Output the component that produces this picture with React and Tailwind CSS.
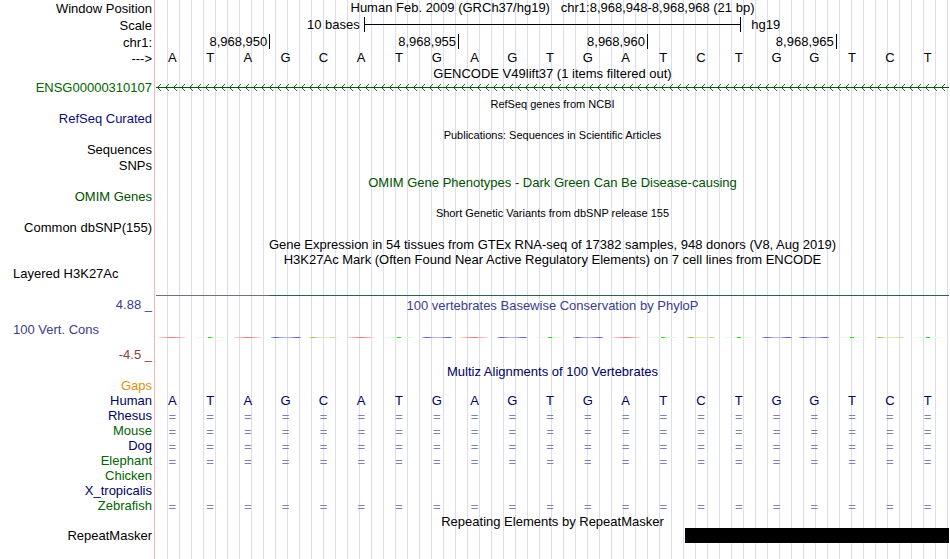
import React from 'react';

const BASES = 'ATAGCATGAGTGATCTGGTCT'.split('');

const consStyles = {
  A: 'w-7 bg-linear-to-r from-[#ffe0e0] via-[#ec7070] to-[#ffe0e0]',
  T: 'w-7 bg-[linear-gradient(to_right,#e6fae6_12px,#20e020_12px,#20e020_16px,#e6fae6_16px)]',
  G: 'w-[30px] bg-[linear-gradient(to_right,#c8c8ff,#5050e0_4px,#b8b8ff_12px,#b8b8ff_18px,#5050e0_27px,#a0a0f0)]',
  C: 'w-7 bg-[linear-gradient(to_right,#e0e0b0,#b0b040_4px,#e4e4c0_9px,#e4e4c0_20px,#c8c880_25px,#ececd0)]',
};

const Row = ({ height = 'h-[15px]', label, labelClass = 'justify-end pb-0.5 text-black', children }) => {
  return (
    <div className={`flex items-stretch ${height}`}>
      <div className={`flex w-[155px] shrink-0 items-center border-r border-[#ffb4b4] pr-0.5 whitespace-pre ${labelClass}`}>
        {label}
      </div>
      <div className="mx-px min-w-0 flex-1 bg-[repeating-linear-gradient(to_right,transparent_0px,transparent_11px,#dcdcf5_11px,#dcdcf5_12px)]">
        {children}
      </div>
    </div>
  );
};

const Title = ({ className = 'text-black', children }) => {
  return <h2 className={`flex h-full items-center justify-center whitespace-pre ${className}`}>{children}</h2>;
};

const BaseCells = ({ className = 'text-black', children }) => {
  return (
    <div className={`grid h-full grid-cols-[repeat(21,minmax(0,1fr))] items-center ${className}`}>
      {BASES.map((base, index) => (
        <span key={index} className="flex justify-center pr-[5px]">{children ? children(base) : base}</span>
      ))}
    </div>
  );
};

const ScaleBar = () => {
  return (
    <div className="grid h-full grid-cols-[repeat(42,minmax(0,1fr))] items-center">
      <span className="col-span-11 pr-1 text-right">10 bases</span>
      <div className="col-span-20 flex h-[15px] items-center border-x border-black">
        <div className="h-px w-full bg-black" />
      </div>
      <span className="col-span-11 pl-2.5">hg19</span>
    </div>
  );
};

const Ruler = () => {
  return (
    <div className="grid h-full grid-cols-[repeat(21,minmax(0,1fr))] items-center text-right">
      <span className="col-span-3 pr-0.5">8,968,950</span>
      <span className="col-span-5 border-l border-black pr-0.5">8,968,955</span>
      <span className="col-span-5 border-l border-black pr-0.5">8,968,960</span>
      <span className="col-span-5 border-l border-black pr-0.5">8,968,965</span>
      <span className="col-span-3 h-[15px] border-l border-black" />
    </div>
  );
};

// intron line with strand arrows pointing left
const GeneArrows = () => {
  return (
    <svg className="block h-[15px] w-full" shapeRendering="crispEdges">
      <defs>
        <pattern id="strand" width="8" height="15" patternUnits="userSpaceOnUse">
          <path d="M1 6h1v1h-1zM2 5h1v1h-1zM3 4h1v1h-1zM4 3h1v1h-1zM2 7h1v1h-1zM3 8h1v1h-1zM4 9h1v1h-1z" fill="#286e28" />
          <path d="M0 6h8v1h-8z" fill="#005a00" />
        </pattern>
      </defs>
      <rect width="100%" height="15" fill="url(#strand)" />
    </svg>
  );
};

const species = [
  { name: 'Rhesus', color: 'justify-end pb-0.5 text-[#000064]', aligned: true },
  { name: 'Mouse', color: 'justify-end pb-0.5 text-[#006400]', aligned: true },
  { name: 'Dog', color: 'justify-end pb-0.5 text-[#000064]', aligned: true },
  { name: 'Elephant', color: 'justify-end pb-0.5 text-[#006400]', aligned: true },
  { name: 'Chicken', color: 'justify-end pb-0.5 text-[#006400]', aligned: false },
  { name: 'X_tropicalis', color: 'justify-end pb-0.5 text-[#000064]', aligned: false },
  { name: 'Zebrafish', color: 'justify-end pb-0.5 text-[#006400]', aligned: true },
];

const App = () => {
  return (
    <main className="flex min-h-screen flex-col overflow-hidden bg-white font-['Liberation_Sans',Arial,sans-serif] text-[13px] leading-[15px]">
      <Row height="h-4" label="Window Position" labelClass="justify-end">
        <Title className="pb-0.5">{'Human Feb. 2009 (GRCh37/hg19)   chr1:8,968,948-8,968,968 (21 bp)'}</Title>
      </Row>
      <Row height="h-[17px]" label="Scale" labelClass="justify-end pt-0.5"><ScaleBar /></Row>
      <Row height="h-[17px]" label="chr1:" labelClass="justify-end pt-0.5"><Ruler /></Row>
      <Row height="h-4" label="--->" labelClass="justify-end"><BaseCells className="pb-0.5 leading-[13px]" /></Row>

      <Row><Title>GENCODE V49lift37 (1 items filtered out)</Title></Row>
      <Row label="ENSG00000310107" labelClass="justify-end pb-0.5 text-[#006400]"><GeneArrows /></Row>
      <Row height="h-4"><Title className="text-[11px]">RefSeq genes from NCBI</Title></Row>
      <Row label="RefSeq Curated" labelClass="justify-end pb-0.5 text-[#0c0c78]" />
      <Row height="h-4"><Title className="text-[11px]">Publications: Sequences in Scientific Articles</Title></Row>
      <Row label="Sequences" />
      <Row height="h-4" label="SNPs" />
      <Row height="h-4"><Title className="text-[#005000]">OMIM Gene Phenotypes - Dark Green Can Be Disease-causing</Title></Row>
      <Row label="OMIM Genes" labelClass="justify-end pb-0.5 text-[#005000]" />
      <Row height="h-4"><Title className="text-[11px]">Short Genetic Variants from dbSNP release 155</Title></Row>
      <Row label="Common dbSNP(155)" />
      <Row height="h-4"><Title>Gene Expression in 54 tissues from GTEx RNA-seq of 17382 samples, 948 donors (V8, Aug 2019)</Title></Row>
      <Row><Title>H3K27Ac Mark (Often Found Near Active Regulatory Elements) on 7 cell lines from ENCODE</Title></Row>
      <Row label="Layered H3K27Ac" labelClass="justify-start pb-0.5 pl-[13px]" />
      <Row height="h-[13px]" />

      <Row height="h-[18px]" label="4.88 _" labelClass="justify-end text-[#3c3c8c]">
        <div className="flex h-full flex-col">
          <div className="grid h-px shrink-0 grid-cols-7">
            <div className="bg-[#7a6a80]" />
            <div className="col-span-6 bg-[#2f5f50]" />
          </div>
          <Title className="pt-0.5 text-[#3c3c8c]">100 vertebrates Basewise Conservation by PhyloP</Title>
        </div>
      </Row>
      <Row height="h-[34px]" label="100 Vert. Cons" labelClass="justify-start pb-0.5 pl-[13px] text-[#3c3c8c]">
        <div className="h-full pt-6">
          <div className="h-px">
            <BaseCells>{(base) => <i className={`block h-px shrink-0 ${consStyles[base]}`} />}</BaseCells>
          </div>
        </div>
      </Row>
      <Row height="h-4" label="-4.5 _" labelClass="justify-end pb-0.5 text-[#8c3c3c]" />

      <Row height="h-4"><Title className="text-[#000064]">Multiz Alignments of 100 Vertebrates</Title></Row>
      <Row label="Gaps" labelClass="justify-end pb-0.5 text-[#e68c0a]" />
      <Row label="Human" labelClass="justify-end pb-0.5 text-[#000064]"><BaseCells className="pb-0.5 leading-[13px] text-[#000064]" /></Row>
      {species.map((item) => (
        <Row key={item.name} label={item.name} labelClass={item.color}>
          {item.aligned && <BaseCells className="text-[#8080b4]">{() => '='}</BaseCells>}
        </Row>
      ))}

      <Row height="h-3.5"><Title>Repeating Elements by RepeatMasker</Title></Row>
      <Row label="RepeatMasker" labelClass="justify-end">
        <div className="grid h-full grid-cols-3">
          <div className="col-start-3 bg-black" />
        </div>
      </Row>
      <Row height="flex-1" />
    </main>
  );
};

export default App;
